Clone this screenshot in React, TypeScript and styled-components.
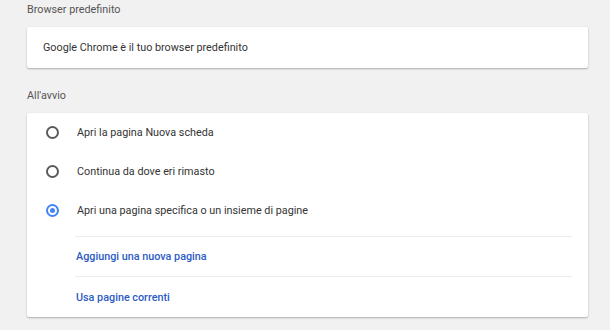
import styled, { createGlobalStyle } from "styled-components";

const GlobalStyle = createGlobalStyle`
  html, body {
    margin: 0;
    padding: 0;
    background: #f1f1f1;
  }
  body {
    font-family: Roboto, "Liberation Sans", sans-serif;
    -webkit-font-smoothing: antialiased;
  }
`;

const Page = styled.div`
  width: 610px;
  height: 330px;
  overflow: hidden;
  padding: 0 22px 0 27px;
  box-sizing: border-box;
  background: #f1f1f1;
`;

const SectionTitle = styled.h2<{ $first?: boolean }>`
  margin: ${(p) => (p.$first ? "0" : "18px")} 0 7px;
  font-size: 10.8px;
  font-weight: 400;
  line-height: 20px;
  color: #555;
`;

const Card = styled.div`
  background: #fff;
  border-radius: 2px;
  box-shadow: 0 1px 2px rgba(0, 0, 0, 0.28), 0 0 1px rgba(0, 0, 0, 0.08);
`;

const InfoRow = styled.div`
  height: 41px;
  display: flex;
  align-items: center;
  padding: 0 16px;
  font-size: 10.8px;
  color: #333;
`;

const RadioList = styled.div`
  padding-bottom: 6px;
`;

const RadioRow = styled.label`
  height: 39px;
  display: flex;
  align-items: center;
  padding-left: 19px;
  gap: 18px;
  font-size: 10.8px;
  color: #333;
  cursor: pointer;
`;

const RadioCircle = styled.span<{ $checked?: boolean }>`
  width: 13px;
  height: 13px;
  box-sizing: border-box;
  border-radius: 50%;
  border: 2px solid ${(p) => (p.$checked ? "#4285f4" : "#5a5a5a")};
  display: flex;
  align-items: center;
  justify-content: center;
  flex: none;

  &::after {
    content: "";
    width: 5px;
    height: 5px;
    border-radius: 50%;
    background: ${(p) => (p.$checked ? "#4285f4" : "transparent")};
  }
`;

const LinkRow = styled.div<{ $last?: boolean }>`
  margin: 0 16px 0 48px;
  padding-left: 1px;
  height: ${(p) => (p.$last ? "41px" : "40px")};
  border-top: 1px solid #ececec;
  box-sizing: border-box;
  display: flex;
  align-items: center;
  font-size: 10.8px;
  font-weight: 500;
  color: #2d5bc4;
  cursor: pointer;
`;

const options = [
  { label: "Apri la pagina Nuova scheda", checked: false },
  { label: "Continua da dove eri rimasto", checked: false },
  { label: "Apri una pagina specifica o un insieme di pagine", checked: true },
];

export default function App() {
  return (
    <>
      <GlobalStyle />
      <Page>
        <SectionTitle $first>Browser predefinito</SectionTitle>
        <Card>
          <InfoRow>Google Chrome è il tuo browser predefinito</InfoRow>
        </Card>

        <SectionTitle>All'avvio</SectionTitle>
        <Card>
          <RadioList>
            {options.map((o) => (
              <RadioRow key={o.label}>
                <RadioCircle $checked={o.checked} />
                {o.label}
              </RadioRow>
            ))}
          </RadioList>
          <LinkRow>Aggiungi una nuova pagina</LinkRow>
          <LinkRow $last>Usa pagine correnti</LinkRow>
        </Card>
      </Page>
    </>
  );
}
